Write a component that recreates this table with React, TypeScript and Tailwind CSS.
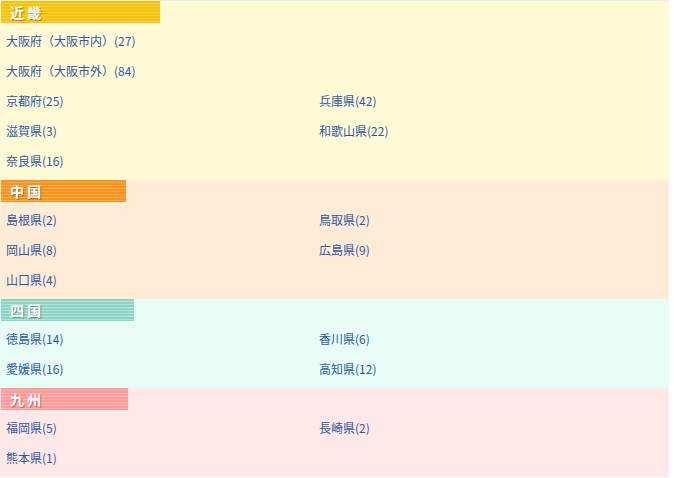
import React from 'react'

type Area = {
  name: string
  bg: string
  head: string
  width: string
  rows: [string, string?][]
}

const areas: Area[] = [
  {
    name: '近 畿',
    bg: 'bg-[#fff9d6]',
    head: 'bg-[repeating-linear-gradient(180deg,#f8c10c_0px,#f8c10c_2px,#fbd044_2px,#fbd044_3px)]',
    width: 'w-[159px]',
    rows: [
      ['大阪府（大阪市内）(27)'],
      ['大阪府（大阪市外）(84)'],
      ['京都府(25)', '兵庫県(42)'],
      ['滋賀県(3)', '和歌山県(22)'],
      ['奈良県(16)'],
    ],
  },
  {
    name: '中 国',
    bg: 'bg-[#ffebd6]',
    head: 'bg-[repeating-linear-gradient(180deg,#f7941d_0px,#f7941d_2px,#f9aa4c_2px,#f9aa4c_3px)]',
    width: 'w-[125px]',
    rows: [
      ['島根県(2)', '鳥取県(2)'],
      ['岡山県(8)', '広島県(9)'],
      ['山口県(4)'],
    ],
  },
  {
    name: '四 国',
    bg: 'bg-[#e6fcf5]',
    head: 'bg-[repeating-linear-gradient(180deg,#8dd5c2_0px,#8dd5c2_2px,#b0e4d6_2px,#b0e4d6_3px)]',
    width: 'w-[133px]',
    rows: [
      ['徳島県(14)', '香川県(6)'],
      ['愛媛県(16)', '高知県(12)'],
    ],
  },
  {
    name: '九 州',
    bg: 'bg-[#ffe8e8]',
    head: 'bg-[repeating-linear-gradient(180deg,#ff9a9a_0px,#ff9a9a_2px,#ffb5b5_2px,#ffb5b5_3px)]',
    width: 'w-[127px]',
    rows: [
      ['福岡県(5)', '長崎県(2)'],
      ['熊本県(1)'],
    ],
  },
]

export default function App() {
  return (
    <div className="w-[674px] h-[478px] bg-white font-['Noto_Sans_CJK_JP',sans-serif]">
      <div className="w-[669px] border-t border-[#e3f3e3]">
        {areas.map((area) => (
          <div key={area.name} className={`${area.bg} pl-px pb-[4px]`}>
            <div
              className={`${area.head} ${area.width} h-[22px] flex items-center pl-[9px] text-white font-bold text-[14px] [text-shadow:1px_1px_1px_rgba(0,0,0,0.35)]`}
            >
              {area.name}
            </div>
            <div className="mt-[3px]">
              {area.rows.map((row, i) => (
                <div key={i} className="grid grid-cols-[318px_1fr] h-[30px] items-center text-[12px] text-[#2a5aa8]">
                  <span className="pl-[5px]">{row[0]}</span>
                  <span>{row[1] ?? ''}</span>
                </div>
              ))}
            </div>
          </div>
        ))}
      </div>
    </div>
  )
}
